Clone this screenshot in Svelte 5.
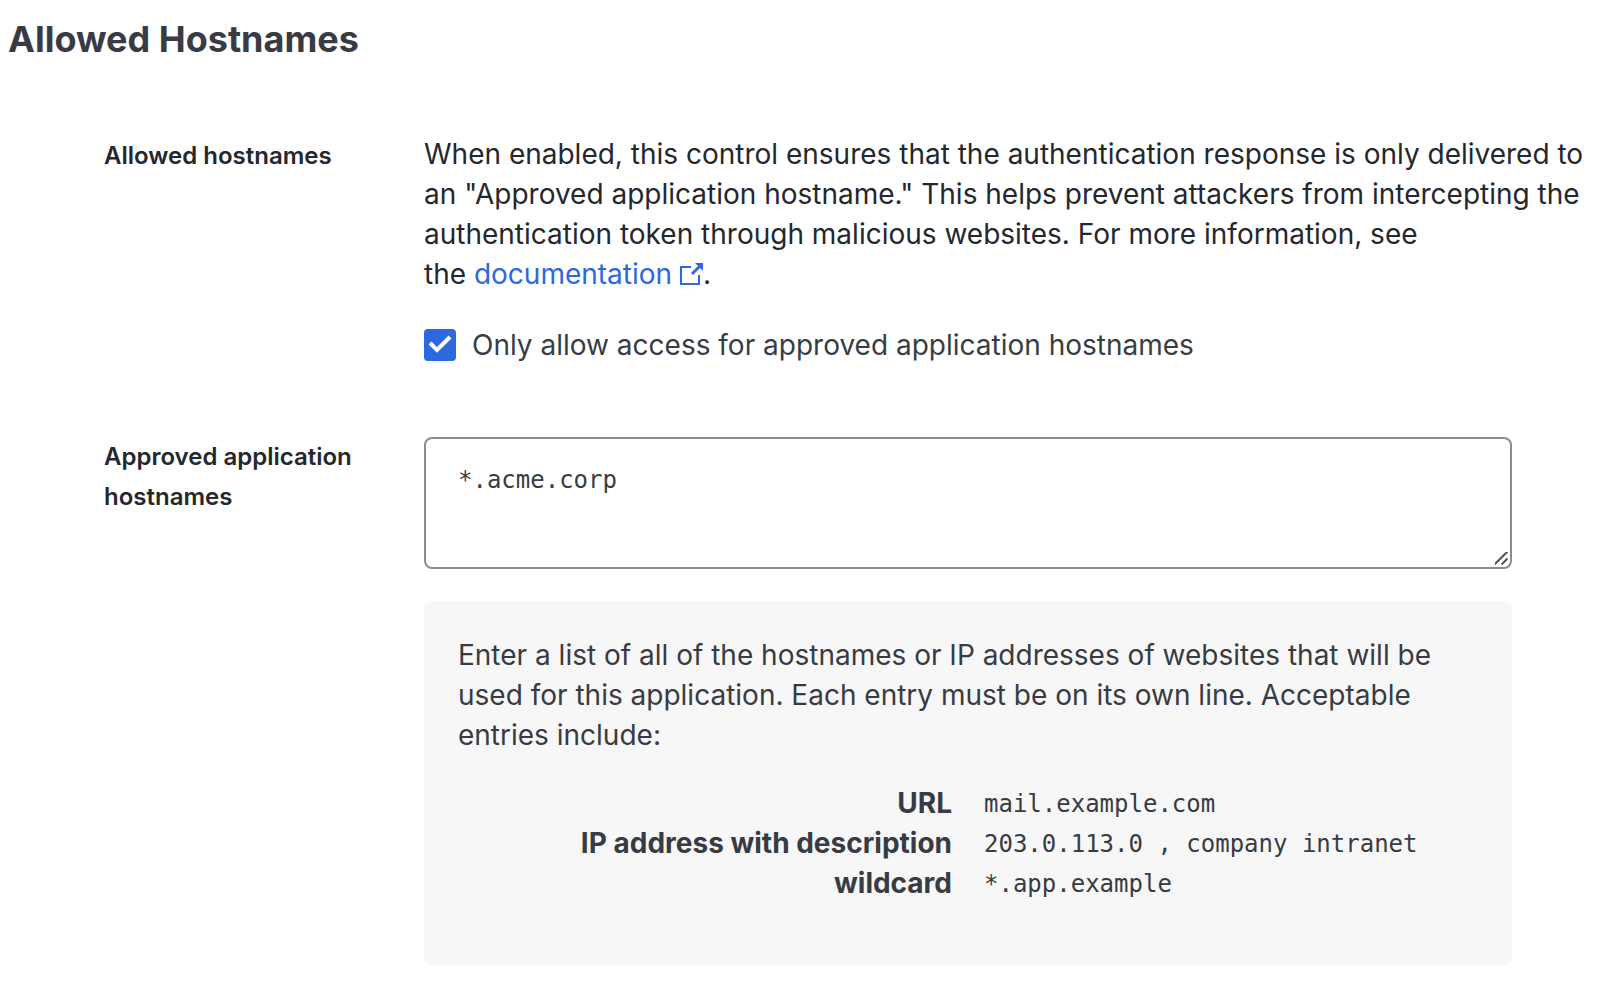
<script>
  let restricted = $state(true);
  let hostnames = $state('*.acme.corp');
  const examples = [
    { kind: 'URL', value: 'mail.example.com' },
    { kind: 'IP address with description', value: '203.0.113.0 , company intranet' },
    { kind: 'wildcard', value: '*.app.example' }
  ];
</script>

<main>
  <h1>Allowed Hostnames</h1>
  <section class="row">
    <h2>Allowed hostnames</h2>
    <div class="intro">
      <p>
        When enabled, this control ensures that the authentication response is only delivered to an "Approved application hostname." This helps prevent attackers from intercepting the authentication token through malicious websites. For more information, see the&nbsp;<a href="#documentation">documentation <svg viewBox="0 0 23 23" aria-hidden="true"><path d="M11 4H1v17h18V12" fill="none" stroke="currentColor" stroke-width="2" /><path d="M12 11 20 3" fill="none" stroke="currentColor" stroke-width="3" /><path d="M15 0h8v8Z" fill="currentColor" /></svg></a>.
      </p>
      <label class="check">
        <input type="checkbox" bind:checked={restricted} />
        <span>Only allow access for approved application hostnames</span>
      </label>
    </div>
  </section>
  <section class="row">
    <label class="name" for="hostnames">Approved application hostnames</label>
    <div class="field">
      <textarea id="hostnames" spellcheck="false" bind:value={hostnames}></textarea>
      <div class="help">
        <p>Enter a list of all of the hostnames or IP addresses of websites that will be used for this application. Each entry must be on its own line. Acceptable entries include:</p>
        <dl>
          {#each examples as example}
            <dt>{example.kind}</dt>
            <dd>{example.value}</dd>
          {/each}
        </dl>
      </div>
    </div>
  </section>
</main>

<style>
  :global(body) { margin: 0; background: #fff; }
  main { box-sizing: border-box; padding: 16px 8px 20px; font: 28px/40px Inter, sans-serif; color: #24272e; }
  h1 { margin: 0; font: 700 36px/46px Inter, sans-serif; color: #383b43; }
  .row { display: grid; grid-template-columns: 288px minmax(0, 1fr); column-gap: 32px; margin: 72px 0 0 96px; }
  h2, .name { margin: 0; font: 600 24px/40px Inter, sans-serif; color: #24272e; }
  h2 { padding-top: 2px; }
  p { margin: 0; }
  a { color: #2d68de; text-decoration: none; }
  a svg { width: 23px; height: 23px; vertical-align: -2px; }
  .check { display: flex; align-items: center; gap: 16px; margin-top: 31px; color: #383d44; }
  .check input { appearance: none; width: 32px; height: 32px; margin: 0; border: 2px solid #2d68de; border-radius: 4px; }
  .check input:checked { background: #2d68de url("data:image/svg+xml,%3Csvg xmlns='http://www.w3.org/2000/svg' viewBox='0 0 32 32'%3E%3Cpath d='M6 14l7 7L26 8' fill='none' stroke='white' stroke-width='4'/%3E%3C/svg%3E") center / 32px 32px no-repeat; }
  .field { margin-right: 80px; }
  textarea { display: block; box-sizing: border-box; width: 100%; height: 132px; padding: 21px 32px; border: 2px solid #868e99; border-radius: 8px; background: #fff; color: #383d44; font: 24px/40px "DejaVu Sans Mono", monospace; resize: vertical; outline: none; }
  textarea::-webkit-scrollbar { width: 18px; height: 18px; }
  textarea::-webkit-resizer { background: url("data:image/svg+xml,%3Csvg xmlns='http://www.w3.org/2000/svg' viewBox='0 0 18 18'%3E%3Cpath d='M1 14 14 1M8 14l6-6' fill='none' stroke='%23555' stroke-width='2'/%3E%3C/svg%3E") center / 18px 18px no-repeat; }
  .help { margin-top: 32px; padding: 34px 64px 62px 34px; border-radius: 8px; background: #f7f7f7; color: #383b43; }
  dl { display: grid; grid-template-columns: 494px 1fr; column-gap: 32px; margin: 28px 0 0; }
  dt { text-align: right; font-weight: 700; }
  dd { margin: 0; font: 24px/42px "DejaVu Sans Mono", monospace; height: 40px; }
</style>
